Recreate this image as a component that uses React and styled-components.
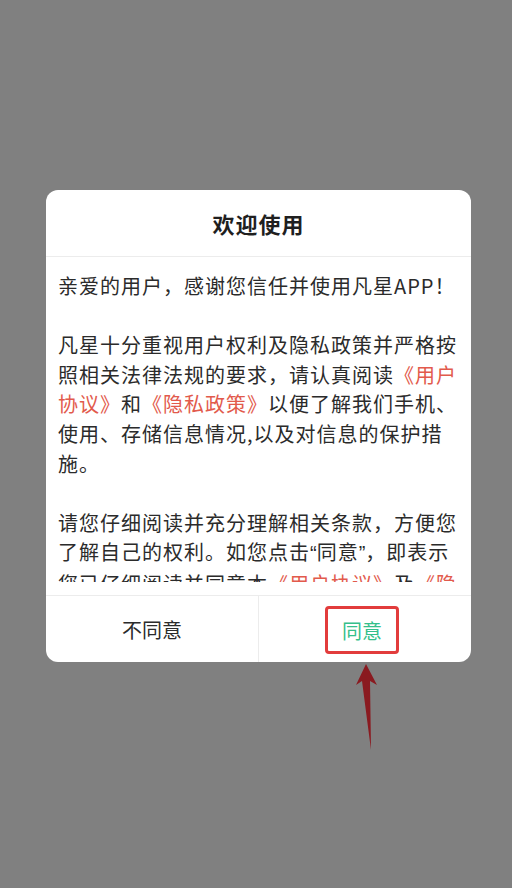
import React from 'react';
import styled, { createGlobalStyle } from 'styled-components';

const GlobalStyle = createGlobalStyle`
  html, body {
    margin: 0;
    padding: 0;
  }
  body {
    font-family: "Noto Sans CJK SC", "Noto Sans", sans-serif;
  }
`;

const Page = styled.div`
  position: relative;
  width: 512px;
  height: 888px;
  background-color: #808080;
  padding: 190px 0 0 46px;
  box-sizing: border-box;
  overflow: hidden;
`;

const Dialog = styled.div`
  width: 425px;
  background: #fff;
  border-radius: 12px;
  display: flex;
  flex-direction: column;
  overflow: hidden;
`;

const Title = styled.h2`
  margin: 0;
  height: 66px;
  display: flex;
  align-items: center;
  justify-content: center;
  font-size: 22px;
  font-weight: bold;
  color: #1f1f1f;
  letter-spacing: 1px;
  border-bottom: 1px solid #ececec;
`;

const Body = styled.div`
  height: 325px;
  padding: 14px 10px 0 12px;
  box-sizing: border-box;
  margin-bottom: 13px;
  overflow: hidden;
  font-size: 20px;
  line-height: 29.6px;
  letter-spacing: 1px;
  color: #2b2b2b;

  p {
    margin: 0 0 29.6px 0;
  }
`;

const LinkText = styled.span`
  color: #e25a4c;
`;

// narrow latin quote marks, as the original renders them
const Quote = styled.span`
  font-family: "Liberation Sans", sans-serif;
  letter-spacing: 0;
`;

const Actions = styled.div`
  display: flex;
  height: 66px;
  border-top: 1px solid #ececec;
`;

const ActionButton = styled.button`
  flex: 1;
  border: none;
  background: none;
  display: flex;
  align-items: center;
  justify-content: center;
  font-family: inherit;
  font-size: 20px;
  color: ${(p) => (p.primary ? '#35bf8b' : '#2b2b2b')};
  & + & {
    border-left: 1px solid #ececec;
  }
`;

const Highlight = styled.span`
  display: inline-flex;
  align-items: center;
  justify-content: center;
  width: 74px;
  height: 48px;
  box-sizing: border-box;
  border: 3px solid #e23c3c;
  border-radius: 4px;
  margin-left: -6px;
  margin-top: 2px;
`;

const Arrow = styled.svg`
  position: absolute;
  left: 0;
  top: 0;
  pointer-events: none;
`;

export default function App() {
  return (
    <>
      <GlobalStyle />
      <Page>
        <Dialog>
          <Title>欢迎使用</Title>
          <Body>
            <p>亲爱的用户，感谢您信任并使用凡星APP！</p>
            <p>
              凡星十分重视用户权利及隐私政策并严格按照相关法律法规的要求，请认真阅读
              <LinkText>《用户协议》</LinkText>和<LinkText>《隐私政策》</LinkText>
              以便了解我们手机、使用、存储信息情况,以及对信息的保护措施。
            </p>
            <p>
              请您仔细阅读并充分理解相关条款，方便您了解自己的权利。如您点击<Quote>“</Quote>同意<Quote>”</Quote>，即表示您已仔细阅读并同意本
              <LinkText>《用户协议》</LinkText>及<LinkText>《隐私政策》</LinkText>
              ，将尽全力保障您的合法权益并继续为您提供优质的产品和服务。
            </p>
          </Body>
          <Actions>
            <ActionButton>不同意</ActionButton>
            <ActionButton primary>
              <Highlight>同意</Highlight>
            </ActionButton>
          </Actions>
        </Dialog>
        <Arrow width="512" height="888" viewBox="0 0 512 888">
          <polygon
            points="366,664 377,685 370,681 371,750 362,681 356,685"
            fill="#8a1a20"
          />
        </Arrow>
      </Page>
    </>
  );
}
